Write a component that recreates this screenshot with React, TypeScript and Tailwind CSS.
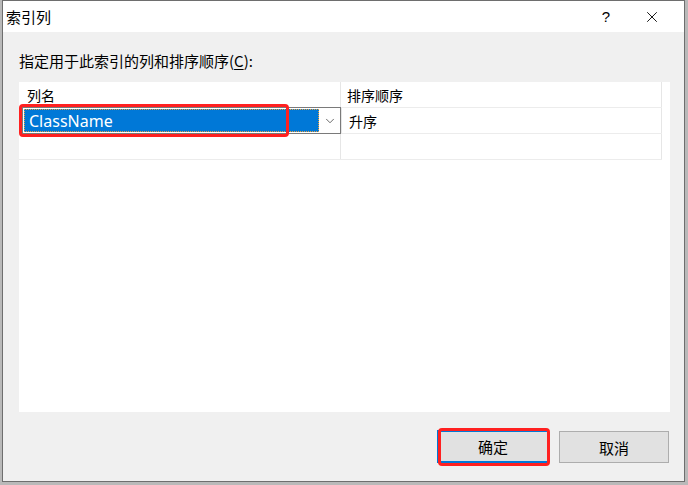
import { ChevronDown, X } from 'lucide-react';

const cjk = { fontFamily: '"Noto Sans CJK SC", "Noto Sans", sans-serif' };

export default function App() {
  return (
    <div className="w-[688px] h-[485px] bg-[#b9b9b9] overflow-hidden">
      <div
        className="relative ml-[2px] w-[683px] h-[482px] flex flex-col bg-[#f0f0f0] border border-[#6e6e6e] text-[15px] text-black"
        style={cjk}
      >
        {/* Title bar */}
        <div className="h-[31px] shrink-0 bg-white flex items-center">
          <span className="ml-[3px] text-[15px] leading-none">索引列</span>
          <div className="ml-auto flex items-center">
            <span className="w-[46px] text-center text-[15px] leading-none" style={{ fontFamily: '"Liberation Sans", sans-serif' }}>?</span>
            <span className="w-[46px] mr-[9px] flex justify-center">
              <X size={18} strokeWidth={1.2} />
            </span>
          </div>
        </div>

        {/* Body */}
        <div className="flex flex-col flex-1 pl-[16px] pr-[14px]">
          <div className="h-[50px] flex items-center pt-[6px] leading-none">
            指定用于此索引的列和排序顺序(<span className="underline underline-offset-2">C</span>):
          </div>

          <div className="h-[330px] bg-white">
            {/* Header */}
            <div className="flex h-[26px] w-[643px] border-b border-[#ececec]">
              <div className="w-[322px] pl-[8px] flex items-center text-[14px] leading-none border-r border-[#e6e6e6]">列名</div>
              <div className="flex-1 pl-[6px] flex items-center text-[14px] leading-none border-r border-[#e6e6e6]">排序顺序</div>
            </div>
            {/* Row 1 */}
            <div className="flex h-[26px] w-[643px] border-b border-[#ececec]">
              <div className="w-[322px] pl-[3px] flex">
                <div className="flex-1 h-[27px] -mt-[1px] border border-[#7a7a7a] bg-white flex items-stretch">
                  <div className="w-[295px] m-[1px] bg-[#0078d7] border border-dotted border-[#e8a040] flex items-center pl-[4px] text-white text-[16px] leading-none" style={{ fontFamily: '"Noto Sans", "Open Sans", sans-serif' }}>
                    ClassName
                  </div>
                  <div className="flex-1 flex items-center justify-center">
                    <ChevronDown size={14} strokeWidth={1.3} className="text-[#3c3c3c]" />
                  </div>
                </div>
              </div>
              <div className="flex-1 pl-[7px] flex items-center text-[14px] leading-none border-l border-r border-[#e6e6e6]">升序</div>
            </div>
            {/* Row 2 */}
            <div className="flex h-[26px] w-[643px] border-b border-[#ececec]">
              <div className="w-[322px] border-r border-[#e6e6e6]" />
              <div className="flex-1 border-r border-[#e6e6e6]" />
            </div>
          </div>

          {/* Buttons */}
          <div className="flex justify-end gap-[10px] mt-[18px] pr-[1px]">
            <button className="w-[112px] h-[33px] bg-[#e1e1e1] border-2 border-[#0078d7] text-[15px] leading-none">确定</button>
            <button className="w-[110px] h-[32px] mt-[1px] bg-[#e1e1e1] border border-[#adadad] text-[15px] leading-none">取消</button>
          </div>
        </div>

        {/* Red annotation boxes */}
        <div className="absolute left-[16px] top-[103px] w-[270px] h-[33px] border-[3px] border-[#ff2020] rounded-[4px] pointer-events-none" />
        <div className="absolute left-[435px] top-[427px] w-[112px] h-[38px] border-[3px] border-[#ff2020] rounded-[4px] pointer-events-none" />
      </div>
    </div>
  );
}
